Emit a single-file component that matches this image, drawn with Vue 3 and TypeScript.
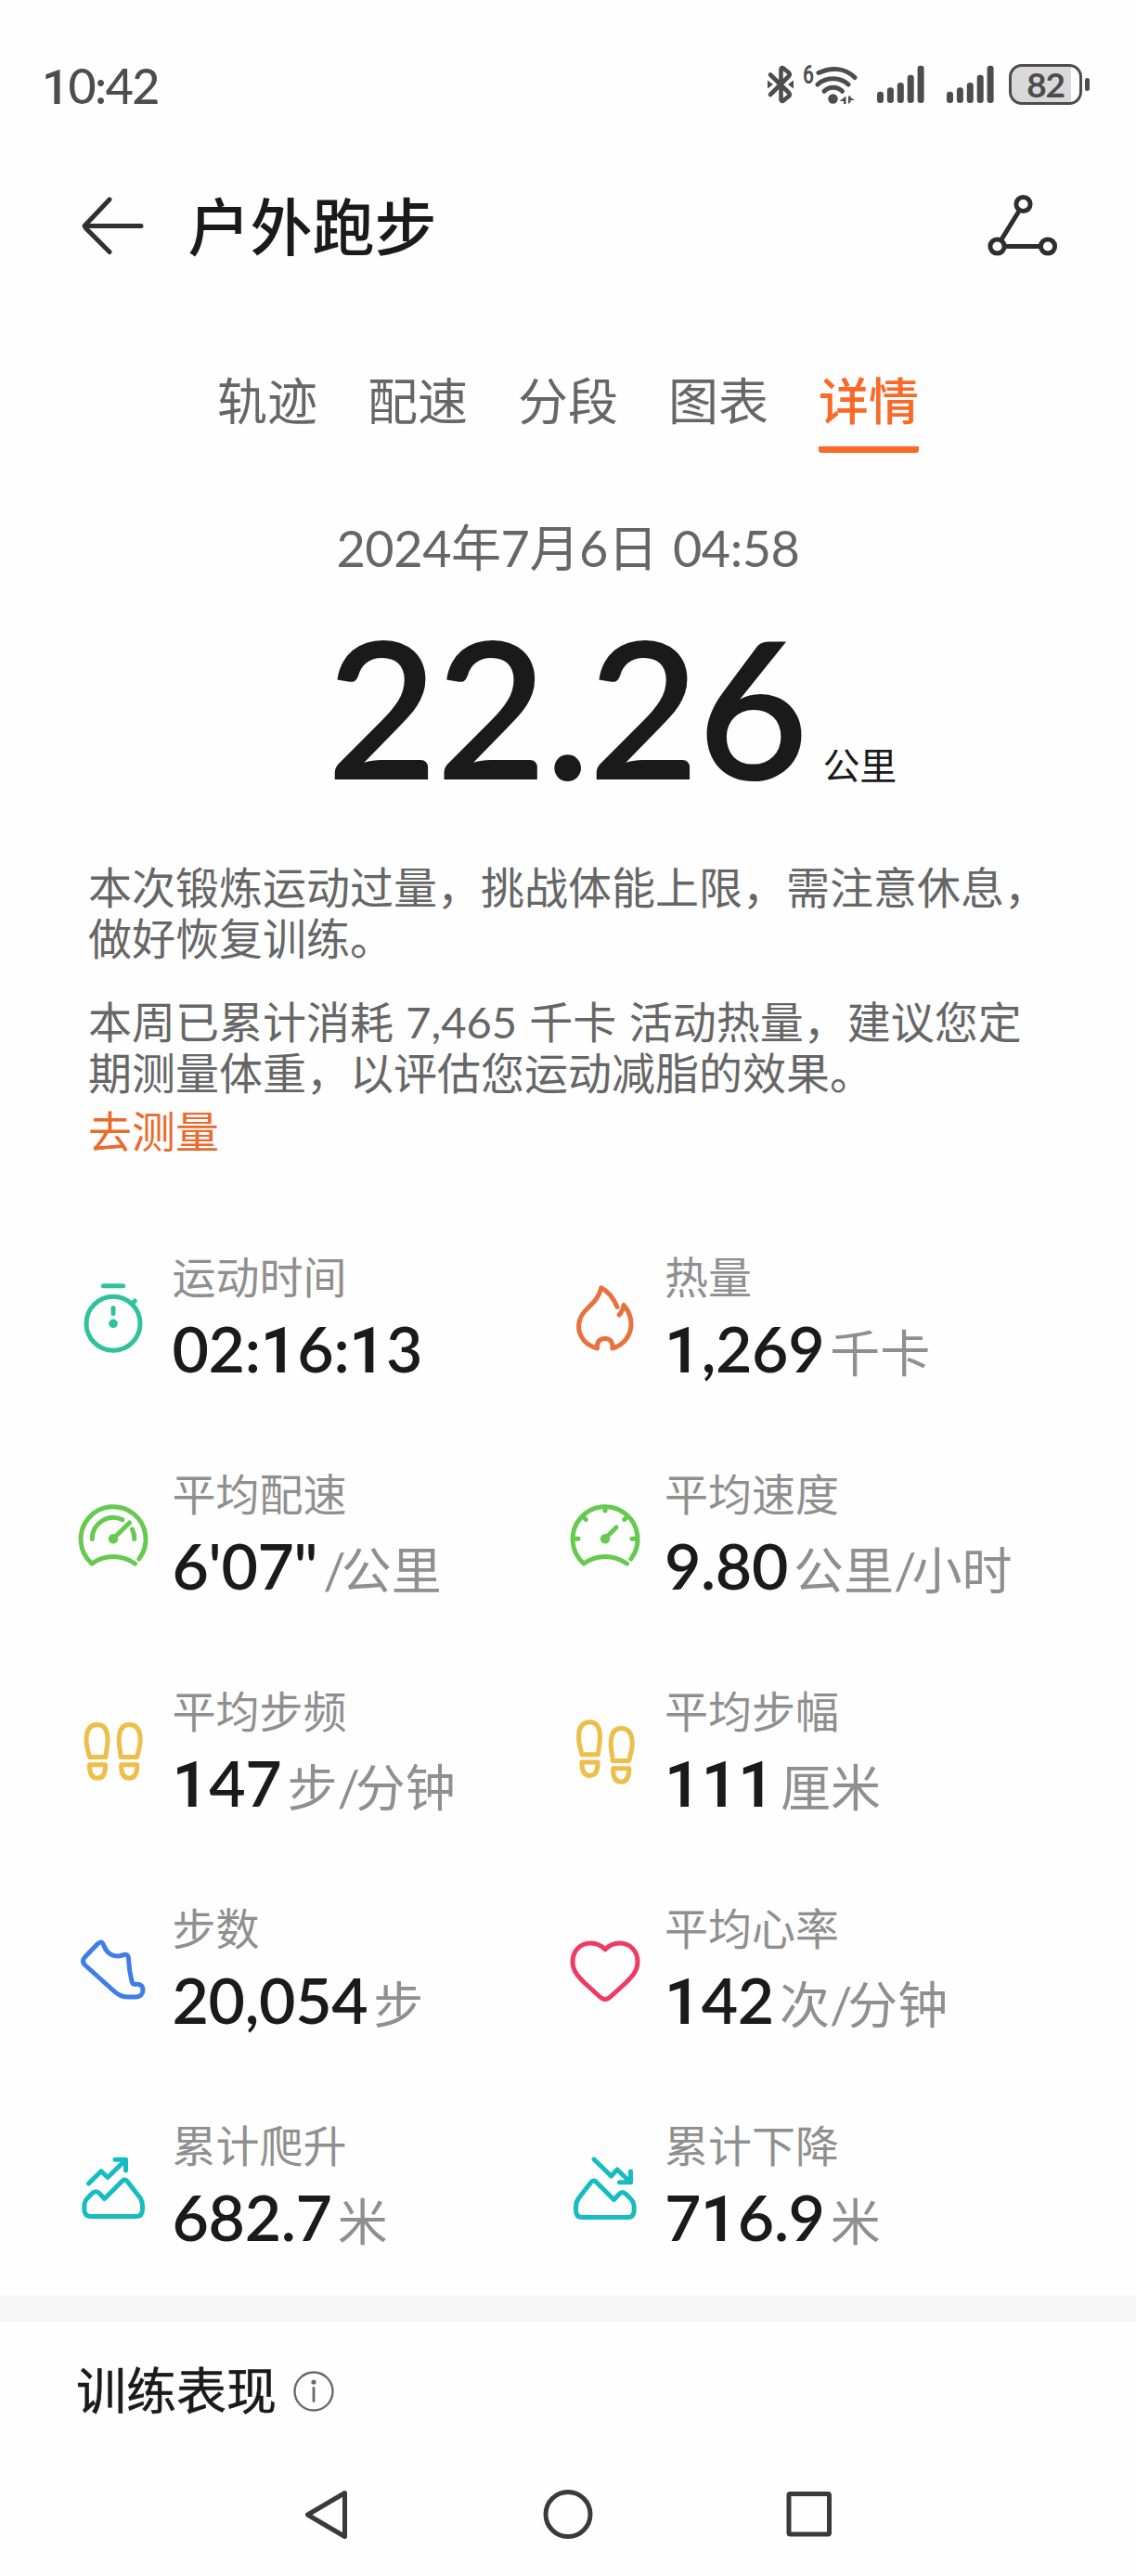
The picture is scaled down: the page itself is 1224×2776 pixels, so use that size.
<script setup lang="ts">
interface Stat {
  label: string
  value: string
  unit: string
  icon: string
  color: string
}

const tabs: string[] = ['轨迹', '配速', '分段', '图表', '详情']
const activeTab = '详情'

const stats: Stat[] = [
  { label: '运动时间', value: '02:16:13', unit: '', icon: 'timer', color: '#2fc29b' },
  { label: '热量', value: '1,269', unit: '千卡', icon: 'flame', color: '#e8713c' },
  { label: '平均配速', value: '6\'07"', unit: '/公里', icon: 'pace', color: '#65ca4f' },
  { label: '平均速度', value: '9.80', unit: '公里/小时', icon: 'speed', color: '#65ca4f' },
  { label: '平均步频', value: '147', unit: '步/分钟', icon: 'cadence', color: '#edbe4a' },
  { label: '平均步幅', value: '111', unit: '厘米', icon: 'stride', color: '#edbe4a' },
  { label: '步数', value: '20,054', unit: '步', icon: 'shoe', color: '#3f7de8' },
  { label: '平均心率', value: '142', unit: '次/分钟', icon: 'heart', color: '#ef3b63' },
  { label: '累计爬升', value: '682.7', unit: '米', icon: 'climb', color: '#17bcc0' },
  { label: '累计下降', value: '716.9', unit: '米', icon: 'descent', color: '#17bcc0' },
]

// Splits a number into runs so that each "1" can use a face without a foot serif.
const runs = (text: string): string[] => text.split(/(1)/).filter((part) => part !== '')

// Splits a unit around its slash, which is set tighter than the characters.
const unitRuns = (text: string): string[] => text.split(/(\/)/).filter((part) => part !== '')

const bars: number[] = [12.3, 16.7, 22, 30.3, 40.3]
</script>

<template>
  <div class="page">
    <div class="status">
      <span class="clock"><span v-for="(r, i) in runs('10:42')" :key="i" :class="{ one: r === '1' }">{{ r }}</span></span>
      <div class="status-icons">
        <svg class="bt" width="30" height="44" viewBox="0 0 30 44" fill="none" stroke="#4d4d4d" stroke-width="4.6" stroke-linecap="round" stroke-linejoin="round">
          <path d="M4 11.5 L24 31 C25.500 33 25 34 23.500 35 L18 39.500 C16.500 40.500 15.500 40 15.500 38 V6 C15.500 4 16.500 3.500 18 4.500 L23.500 9 C25 10.500 25.500 11.500 24 13 L4 33" />
          <path d="M1 17.500 L7 22 L1 26.500 Z M29 17.500 L23 22 L29 26.500 Z" fill="#4d4d4d" stroke="none" />
        </svg>
        <div class="wifi">
          <span class="gen">6</span>
          <svg width="46" height="44" viewBox="0 0 46 44" fill="none" stroke="#4d4d4d" stroke-width="5" stroke-linecap="round">
            <path d="M4 9.500 C17 3.500 32 3.500 43 14.500" />
            <path d="M3 22 C12 13.800 27 13.800 36 22" />
            <path d="M10 29.300 C15.500 24 24 24 29.500 29.300" />
            <g fill="#4d4d4d" stroke="none">
              <circle cx="19.500" cy="37.500" r="5.200" />
              <path d="M33.500 34.500 V43 H31 V40 H26.500 Z M36 34.500 V43 L38.500 41 V39 H43 L38.500 36 V34.500 Z" />
            </g>
          </svg>
        </div>
        <svg v-for="n in 2" :key="n" class="signal" width="51" height="44" viewBox="0 0 51 44" fill="#4d4d4d">
          <rect v-for="(h, i) in bars" :key="i" :x="i * 10.9" :y="43 - h" width="7" :height="h" rx="3.3" />
        </svg>
        <div class="battery">82</div>
        <i class="battery-tip"></i>
      </div>
    </div>

    <header class="header">
      <svg class="back" width="70" height="66" viewBox="0 0 70 66" fill="none" stroke="#303030" stroke-width="5" stroke-linecap="round" stroke-linejoin="round">
        <path d="M66 33.500 H5 L32 5 M6.500 36 L32 61.500" />
      </svg>
      <h1>户外跑步</h1>
      <svg class="share" width="78" height="70" viewBox="0 0 78 70" fill="none" stroke="#2e2e2e" stroke-width="5">
        <circle cx="39.500" cy="12" r="7.600" />
        <circle cx="11.500" cy="57.500" r="7.600" />
        <circle cx="66" cy="57.500" r="7.600" />
        <path d="M35.500 18.500 L15.500 51 M19 57.500 H58.500" />
      </svg>
    </header>

    <nav class="tabs">
      <span v-for="tab in tabs" :key="tab" class="tab" :class="{ active: tab === activeTab }">{{ tab }}</span>
    </nav>

    <div class="date">2024年7月6日 04:58</div>
    <div class="distance"><span class="km">22.26</span><span class="km-unit">公里</span></div>

    <section class="advice">
      <p>本次锻炼运动过量，挑战体能上限，需注意休息，<br />做好恢复训练。</p>
      <p>本周已累计消耗 7,465 千卡 活动热量，建议您定<br />期测量体重，以评估您运动减脂的效果。</p>
      <a class="link">去测量</a>
    </section>

    <section class="stats">
      <div v-for="s in stats" :key="s.label" class="stat">
        <svg class="icon" width="80" height="80" viewBox="0 0 80 80" fill="none" :stroke="s.color" stroke-width="5" stroke-linecap="round" stroke-linejoin="round">
          <template v-if="s.icon === 'timer'">
            <circle cx="40" cy="47.3" r="29" />
            <path d="M29.300 6.700 H50.700 M60 26.500 L63.300 22.800 M40 30.500 V36.500" />
            <circle cx="40" cy="47.3" r="4.800" :fill="s.color" stroke="none" />
          </template>
          <path v-else-if="s.icon === 'flame'" d="M53 29.500 C49.500 21 44 13 35.700 8.800 C33.500 19 28 24 21 31 C10 41 10 53 14 60.500 C17.500 68 24 72 31.500 74 C30.800 67 34 63.500 39.800 63.500 C46 63.500 48.500 67.500 47.900 74 C60 70.500 68 60 68 48 C68 40 64.500 32.500 60 27.500 C59 32.500 58 35.500 55 38" />
          <template v-else-if="s.icon === 'pace'">
            <path d="M67.800 67 A35 35 0 1 0 17 72 C31 62 49 62 63.500 72" />
            <path d="M17.300 45.500 A22.800 22.800 0 0 1 50 24.700 M62.800 45.500 A22.800 22.800 0 0 0 60.500 35 M40 45 L57.500 28" />
            <circle cx="40" cy="45.200" r="5.200" :fill="s.color" stroke="none" />
          </template>
          <template v-else-if="s.icon === 'speed'">
            <path d="M67.800 67 A35 35 0 1 0 17 72 C31 62 49 62 63.500 72" />
            <path d="M40 11 V15 M7 45.200 H11 M69 45.200 H73 M16 21 L19.300 24.700 M64 21 L60.700 24.700 M40 45 L52 33" />
            <circle cx="40" cy="45.200" r="5.200" :fill="s.color" stroke="none" />
          </template>
          <template v-else-if="s.icon === 'cadence' || s.icon === 'stride'">
            <g :transform="s.icon === 'stride' ? 'translate(0.5 -2.800)' : undefined">
              <path d="M14.500 46.500 C12.500 38 11 34 11 28.500 C11 17 15 11.500 23 11.500 C30.500 11.500 34 18 34 28.500 C34 35 32.500 39 32 46.500 Z" />
              <path d="M14.500 54.700 H31.500 V58 C31 66 28 69.200 23 69.200 C17.500 69.200 15 65 14.500 58 Z" />
            </g>
            <g :transform="s.icon === 'stride' ? 'translate(80.200 4) scale(-1 1)' : 'translate(80.200 0) scale(-1 1)'">
              <path d="M14.500 46.500 C12.500 38 11 34 11 28.500 C11 17 15 11.500 23 11.500 C30.500 11.500 34 18 34 28.500 C34 35 32.500 39 32 46.500 Z" />
              <path d="M14.500 54.700 H31.500 V58 C31 66 28 69.200 23 69.200 C17.500 69.200 15 65 14.500 58 Z" />
            </g>
          </template>
          <path v-else-if="s.icon === 'shoe'" d="M23 14 L9.500 28 C7 31 7 34 9.500 36.500 L40 64 C46 69.500 50 71 57 71 H64 C69.500 71 72 67.500 72 63.500 C72 59 69 57 65.500 57.300 C62 57.500 61 57.500 60 54 C58 46 57 40 56.500 30 C56.300 25.500 54 24.500 50 26 C42 28.500 34 26 30 16 C28.500 11.500 26.500 10.500 23 14 Z" />
          <path v-else-if="s.icon === 'heart'" d="M40 19.800 C35 14.500 30 13 24.500 13 C12.500 13 5 22 5 33 C5 43 11 49 18 56 L34.500 71 C38 74.300 42 74.300 45.500 71 L62 56 C69 49 75 43 75 33 C75 22 67.500 13 55.500 13 C50 13 45 14.500 40 19.800 Z" />
          <template v-else-if="s.icon === 'climb'">
            <path d="M13.500 38 L27 24.700 L34 31.500 L53 13 M42 12.200 H53.500 V24" />
            <path d="M47 11 H55 V19 Z" :fill="s.color" stroke="none" />
            <path d="M8.800 64 C8.800 58 10 56 13 53 L17.500 48.500 C20 46 22.500 46 25 48.500 L30.600 54.500 L49.500 35.500 C51.500 33.300 53.500 33.500 55 35.500 L69 53.500 C71 56.500 71.500 58 71.500 62 V66 C71.500 71 69 73.500 64.500 73.500 H16 C11 73.500 8.800 71 8.800 66 Z" />
          </template>
          <template v-else>
            <path d="M28 12 L46.500 30 L53 23 L66.500 36 M55.500 36.800 H67.500 V25" />
            <path d="M61 38 H69 V30 Z" :fill="s.color" stroke="none" />
            <path d="M71.200 65 C71.200 59 70 57 67 54 L62.500 49.500 C60 47 57.500 47 55 49.500 L49.400 55.500 L30.500 36.500 C28.500 34.300 26.500 34.500 25 36.500 L11 54.500 C9 57.500 8.500 59 8.500 63 V67 C8.500 72 11 74.500 15.500 74.500 H64 C69 74.500 71.200 72 71.200 67 Z" />
          </template>
        </svg>
        <div class="stat-text">
          <div class="label">{{ s.label }}</div>
          <div class="figure">
            <span class="value"><span v-for="(r, i) in runs(s.value)" :key="i" :class="{ one: r === '1' }">{{ r }}</span></span>
            <span v-if="s.unit" class="unit"><span v-for="(r, i) in unitRuns(s.unit)" :key="i" :class="{ slash: r === '/' }">{{ r }}</span></span>
          </div>
        </div>
      </div>
    </section>

    <div class="divider"></div>

    <section class="training">
      <h2>训练表现</h2>
      <svg width="46" height="46" viewBox="0 0 46 46" fill="none" stroke="#6a6a6a" stroke-width="2.400" stroke-linecap="round">
        <circle cx="23" cy="23" r="20.500" />
        <path d="M23 19.500 V33.500" stroke-width="2.800" />
        <circle cx="23" cy="13" r="2.600" fill="#6a6a6a" stroke="none" />
      </svg>
    </section>

    <footer class="sysnav">
      <svg width="56" height="56" viewBox="0 0 56 56"><path d="M47.500 4.500 L7.500 28 L47.500 51.500 Z" /></svg>
      <svg width="56" height="56" viewBox="0 0 56 56"><circle cx="28" cy="27.500" r="24" /></svg>
      <svg width="56" height="56" viewBox="0 0 56 56"><rect x="6" y="5.500" width="43.500" height="43.500" rx="1.500" /></svg>
    </footer>
  </div>
</template>

<style>
body {
  margin: 0;
  background: #fefefe;
}
</style>

<style scoped>
.page {
  width: 1224px;
  height: 2776px;
  overflow: hidden;
  display: flex;
  flex-direction: column;
  background: #fefefe;
  color: #1a1a1a;
  font-family: Lato, "Noto Sans CJK SC", sans-serif;
  font-kerning: none;
  white-space: nowrap;
}
.one {
  font-family: Roboto, sans-serif;
  letter-spacing: 0.012em;
}
.status {
  height: 185px;
  flex: none;
  display: flex;
  justify-content: space-between;
  align-items: flex-start;
  box-sizing: border-box;
  padding: 68px 50px 0 45px;
  color: #4d4d4d;
}
.clock {
  font-size: 52px;
  line-height: 49px;
  font-weight: 500;
  letter-spacing: -0.03em;
}
.clock .one {
  letter-spacing: -0.02em;
}
.status-icons {
  display: flex;
  align-items: flex-start;
}
.bt {
  margin: 1px 9px 0 0;
}
.wifi {
  display: flex;
  width: 60px;
  margin: 1px 20px 0 0;
}
.gen {
  font-family: Roboto, sans-serif;
  font-size: 28px;
  line-height: 24px;
  font-weight: 600;
  width: 12px;
  margin-right: 1px;
  transform: scaleX(0.75);
  transform-origin: left;
}
.signal {
  margin-right: 24px;
}
.signal + .battery {
  margin-left: -8px;
}
.battery {
  box-sizing: border-box;
  width: 79px;
  height: 44px;
  margin-top: 1px;
  border: 3.5px solid #4d4d4d;
  border-radius: 14px;
  background: linear-gradient(90deg, #d9d9d9 0 64px, transparent 64px);
  font-size: 37px;
  line-height: 37px;
  font-weight: 700;
  letter-spacing: -0.03em;
  text-align: center;
}
.battery-tip {
  width: 5px;
  height: 14px;
  margin: 16px 0 0 3px;
  border-radius: 3px;
  background: #4d4d4d;
}
.header {
  height: 116px;
  flex: none;
  display: flex;
  align-items: center;
  padding: 0 83px 0 86px;
}
h1,
h2 {
  margin: 0;
}
h1 {
  margin: 1px 0 0 46.5px;
  font-size: 67px;
  line-height: 80px;
  font-weight: 500;
}
.share {
  margin-left: auto;
}
.tabs {
  flex: none;
  display: flex;
  justify-content: center;
  gap: 54px;
  margin-top: 94px;
}
.tab {
  height: 93px;
  box-sizing: border-box;
  font-size: 54px;
  line-height: 76px;
  color: #666;
}
.tab.active {
  color: #f96a28;
  font-weight: 500;
  background: linear-gradient(#f96a28, #f96a28) bottom / 100% 7px no-repeat;
  border-radius: 0 0 3px 3px;
}
.date {
  flex: none;
  margin-top: 73px;
  height: 60px;
  line-height: 60px;
  font-size: 54px;
  text-align: center;
  color: #666;
  letter-spacing: -0.008em;
  word-spacing: 3px;
}
.distance {
  flex: none;
  height: 240px;
  margin-top: 20px;
  display: flex;
  align-items: baseline;
  padding-left: 352px;
}
.km {
  font-size: 206px;
  line-height: 240px;
  font-weight: 600;
  letter-spacing: -0.009em;
}
.km-unit {
  margin-left: 17px;
  font-size: 40px;
}
.advice {
  flex: none;
  height: 419px;
  margin-top: 48px;
  padding-left: 95px;
  font-size: 47px;
  line-height: 55px;
  color: #666;
}
.advice p {
  margin: 0 0 34.5px;
}
.advice p + p {
  margin-bottom: 8px;
  word-spacing: 1.3px;
}
.link {
  display: block;
  color: #ea6a2c;
}
.stats {
  flex: none;
  display: grid;
  grid-template-columns: 530.5px 1fr;
  grid-template-rows: repeat(5, 234px);
  padding-left: 81.5px;
  height: 1126px;
}
.stat {
  display: flex;
}
.icon {
  flex: none;
  margin: 31px 24px 0 0;
}
.label {
  font-size: 47px;
  line-height: 56px;
  color: #8f8f8f;
}
.figure {
  display: flex;
  align-items: baseline;
  margin-top: 9px;
}
.value {
  font-size: 68px;
  line-height: 80px;
  font-weight: 600;
  letter-spacing: -0.005em;
}
.unit {
  margin-left: 6px;
  font-size: 54px;
  line-height: 80px;
  color: #8f8f8f;
}
.slash {
  letter-spacing: -5px;
}
.divider {
  flex: none;
  height: 28px;
  background: #f6f6f6;
}
.training {
  flex: none;
  height: 150px;
  display: flex;
  align-items: center;
  padding-left: 82px;
  gap: 17px;
}
h2 {
  font-size: 54px;
  line-height: 72px;
  font-weight: 400;
  -webkit-text-stroke: 0.5px #1a1a1a;
}
.sysnav {
  display: flex;
  justify-content: center;
  gap: 204px;
  margin-top: 30px;
}
.sysnav svg {
  fill: none;
  stroke: #3a3a3a;
  stroke-width: 5;
  stroke-linejoin: round;
}
</style>
